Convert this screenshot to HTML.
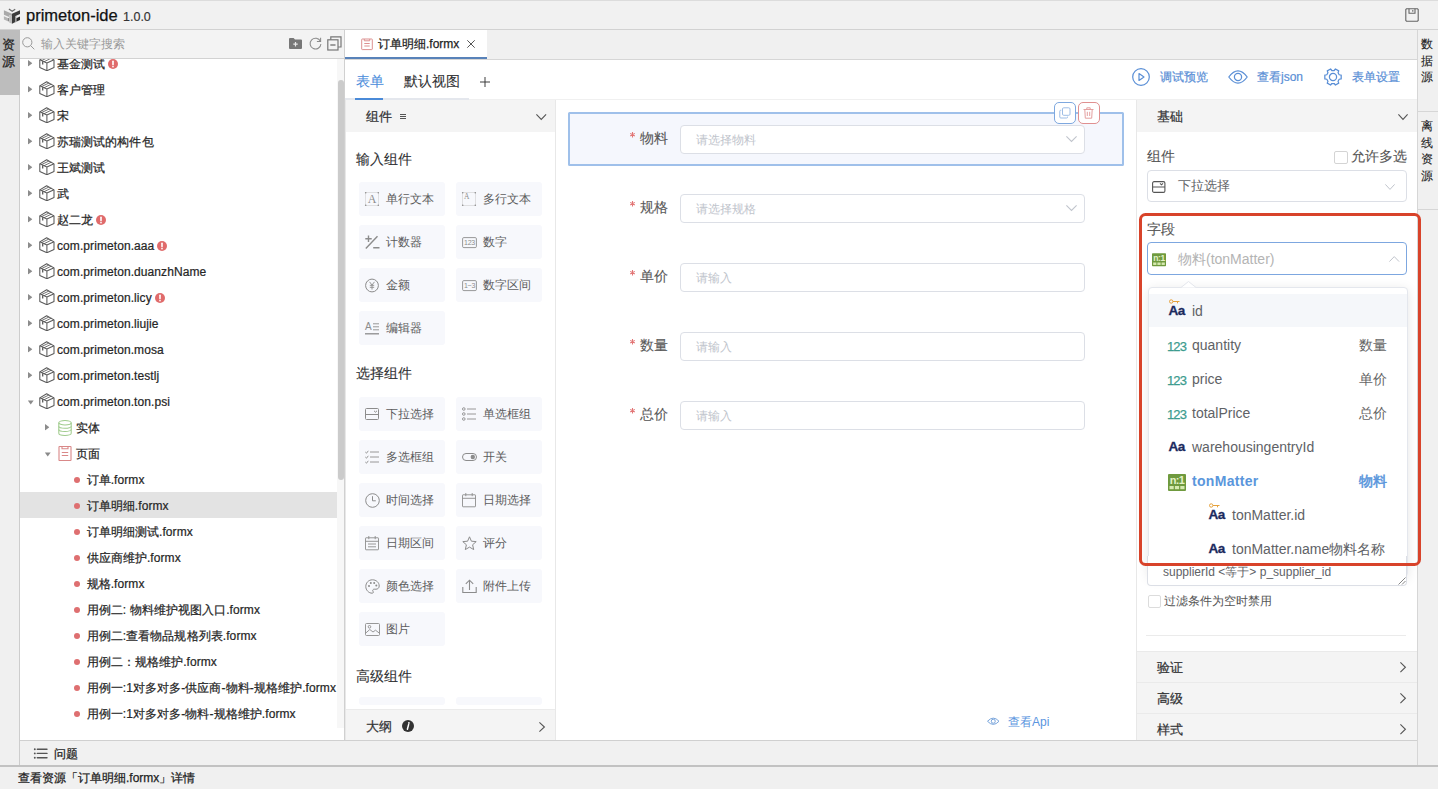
<!DOCTYPE html><html><head><meta charset="utf-8"><style>
*{box-sizing:border-box;margin:0;padding:0}
html,body{width:1438px;height:789px;overflow:hidden;background:#f0f0f0;font-family:"Liberation Sans",sans-serif;color:#333;position:relative}
.s1{-webkit-text-stroke:0.25px currentColor}
.s2{-webkit-text-stroke:0.45px currentColor}
.s0{-webkit-text-stroke:0.1px currentColor}
.a{position:absolute}
.t{position:absolute;white-space:nowrap;line-height:1}
svg{position:absolute;overflow:visible}
.row{position:absolute;left:0;width:318px;height:26px}
.row .tx{position:absolute;top:1px;line-height:26px;font-size:12px;color:#262626;white-space:nowrap;letter-spacing:0.08px;-webkit-text-stroke:0.22px currentColor}
</style></head><body>
<svg width="0" height="0" style="position:absolute"><defs>
<symbol id="pkg" viewBox="0 0 16 16"><g fill="none" stroke="#5a5a5a" stroke-width="1.05" stroke-linejoin="round"><path d="M7.65 0.8L15 4.85V12.5L7.9 15.75L0.8 12.5V4.85Z"/><path d="M0.8 4.85L7.9 8L15 4.85M7.9 8V15.75"/></g><g fill="none" stroke="#5a5a5a" stroke-width="0.85"><path d="M2.5 5.6L9.9 2.05M5.0 6.75L12.3 3.15"/></g><path d="M3.7 6.3V9.4" stroke="#5a5a5a" stroke-width="1.3"/></symbol>
<symbol id="tri" viewBox="0 0 4.4 6.6"><path d="M0 0L4.4 3.3L0 6.6Z" fill="#8c8c8c"/></symbol>
<symbol id="trid" viewBox="0 0 8 6"><path d="M0.5 0.5L7.5 0.5L4 5.5Z" fill="#8a8a8a"/></symbol>
<symbol id="err" viewBox="0 0 10 10"><circle cx="5" cy="5" r="5" fill="#e06b6b"/><path d="M5 2.2V5.6" stroke="#fff" stroke-width="1.6" stroke-linecap="round"/><circle cx="5" cy="7.6" r="0.85" fill="#fff"/></symbol>
</defs></svg>
<div class="a" style="left:0;top:0;width:1438px;height:30px;background:#f1f1f1;border-top:1px solid #dcdcdc;border-bottom:1px solid #d2d2d2"></div>
<svg style="left:0;top:2px" width="26" height="26" viewBox="0 0 26 26">
<path d="M8.9 7L12.2 9.2L15.2 7.3" fill="none" stroke="#6a6a6a" stroke-width="1.3"/>
<path d="M3.9 8.3L12 11.8V14.2L9.2 13V15L3.9 12.7Z" fill="#a9a9a9"/>
<path d="M3.9 14.2L8.3 16.2V19.5L3.9 17.6Z" fill="#b4b4b4"/>
<path d="M8.3 16.2L9.2 15.8V19.1L8.3 19.5Z" fill="#666"/>
<path d="M9.2 13L12 14.2V21.8L9.2 20.4Z" fill="#bdbdbd"/>
<path d="M12 11.8L20 8.2V12L15 14.3V20.2L12 21.8Z" fill="#3a3a3a"/>
<path d="M16.3 16.2L20 14.4V18L16.3 19.8Z" fill="#2a2a2a"/>
<path d="M15 14.3L16.3 13.7V19.9L15 20.5Z" fill="#9a9a9a"/>
</svg>
<div class="t s1" style="left:26px;top:7px;font-size:16.5px;color:#111">primeton-ide</div>
<div class="t" style="left:123px;top:11px;font-size:12.5px;color:#333;-webkit-text-stroke:0.15px currentColor">1.0.0</div>
<svg style="left:1405px;top:8px" width="14" height="14" viewBox="0 0 14 14"><g fill="none" stroke="#666" stroke-width="1.1"><path d="M1.5 0.8H12.5L13.2 1.5V12.5L12.5 13.2H1.5L0.8 12.5V1.5Z"/><path d="M4 0.8V5.2H10V0.8"/><path d="M7.8 2V3.8"/></g></svg>
<div class="a" style="left:0;top:30px;width:20px;height:737px;background:#f0f0f0;border-right:1px solid #cdcdcd"></div>
<div class="a" style="left:0;top:30px;width:20px;height:65px;background:#bdbdbd"></div>
<div class="t s1" style="left:2px;top:38px;font-size:13px;color:#222">资</div>
<div class="t s1" style="left:2px;top:54.5px;font-size:13px;color:#222">源</div>
<div class="a" style="left:20px;top:30px;width:325px;height:711px;background:#fff;border-right:1px solid #d0d0d0;overflow:hidden">
<div class="a" style="left:0;top:28px;width:318px;height:683px;overflow:hidden">
<div class="row" style="top:-8px;">
<svg style="left:7.8px;top:10px" width="4.4" height="6.6" viewBox="0 0 4.4 6.6"><use href="#tri"/></svg>
<svg style="left:18.5px;top:5px" width="16" height="16" viewBox="0 0 16 16"><use href="#pkg"/></svg>
<span class="tx" style="left:37px">基金测试</span>
<svg style="left:87.5px;top:8.5px" width="10" height="10" viewBox="0 0 10 10"><use href="#err"/></svg>
</div>
<div class="row" style="top:18px;">
<svg style="left:7.8px;top:10px" width="4.4" height="6.6" viewBox="0 0 4.4 6.6"><use href="#tri"/></svg>
<svg style="left:18.5px;top:5px" width="16" height="16" viewBox="0 0 16 16"><use href="#pkg"/></svg>
<span class="tx" style="left:37px">客户管理</span>
</div>
<div class="row" style="top:44px;">
<svg style="left:7.8px;top:10px" width="4.4" height="6.6" viewBox="0 0 4.4 6.6"><use href="#tri"/></svg>
<svg style="left:18.5px;top:5px" width="16" height="16" viewBox="0 0 16 16"><use href="#pkg"/></svg>
<span class="tx" style="left:37px">宋</span>
</div>
<div class="row" style="top:70px;">
<svg style="left:7.8px;top:10px" width="4.4" height="6.6" viewBox="0 0 4.4 6.6"><use href="#tri"/></svg>
<svg style="left:18.5px;top:5px" width="16" height="16" viewBox="0 0 16 16"><use href="#pkg"/></svg>
<span class="tx" style="left:37px">苏瑞测试的构件包</span>
</div>
<div class="row" style="top:96px;">
<svg style="left:7.8px;top:10px" width="4.4" height="6.6" viewBox="0 0 4.4 6.6"><use href="#tri"/></svg>
<svg style="left:18.5px;top:5px" width="16" height="16" viewBox="0 0 16 16"><use href="#pkg"/></svg>
<span class="tx" style="left:37px">王斌测试</span>
</div>
<div class="row" style="top:122px;">
<svg style="left:7.8px;top:10px" width="4.4" height="6.6" viewBox="0 0 4.4 6.6"><use href="#tri"/></svg>
<svg style="left:18.5px;top:5px" width="16" height="16" viewBox="0 0 16 16"><use href="#pkg"/></svg>
<span class="tx" style="left:37px">武</span>
</div>
<div class="row" style="top:148px;">
<svg style="left:7.8px;top:10px" width="4.4" height="6.6" viewBox="0 0 4.4 6.6"><use href="#tri"/></svg>
<svg style="left:18.5px;top:5px" width="16" height="16" viewBox="0 0 16 16"><use href="#pkg"/></svg>
<span class="tx" style="left:37px">赵二龙</span>
<svg style="left:75.5px;top:8.5px" width="10" height="10" viewBox="0 0 10 10"><use href="#err"/></svg>
</div>
<div class="row" style="top:174px;">
<svg style="left:7.8px;top:10px" width="4.4" height="6.6" viewBox="0 0 4.4 6.6"><use href="#tri"/></svg>
<svg style="left:18.5px;top:5px" width="16" height="16" viewBox="0 0 16 16"><use href="#pkg"/></svg>
<span class="tx" style="left:37px">com.primeton.aaa</span>
<svg style="left:136.5px;top:8.5px" width="10" height="10" viewBox="0 0 10 10"><use href="#err"/></svg>
</div>
<div class="row" style="top:200px;">
<svg style="left:7.8px;top:10px" width="4.4" height="6.6" viewBox="0 0 4.4 6.6"><use href="#tri"/></svg>
<svg style="left:18.5px;top:5px" width="16" height="16" viewBox="0 0 16 16"><use href="#pkg"/></svg>
<span class="tx" style="left:37px">com.primeton.duanzhName</span>
</div>
<div class="row" style="top:226px;">
<svg style="left:7.8px;top:10px" width="4.4" height="6.6" viewBox="0 0 4.4 6.6"><use href="#tri"/></svg>
<svg style="left:18.5px;top:5px" width="16" height="16" viewBox="0 0 16 16"><use href="#pkg"/></svg>
<span class="tx" style="left:37px">com.primeton.licy</span>
<svg style="left:135px;top:8.5px" width="10" height="10" viewBox="0 0 10 10"><use href="#err"/></svg>
</div>
<div class="row" style="top:252px;">
<svg style="left:7.8px;top:10px" width="4.4" height="6.6" viewBox="0 0 4.4 6.6"><use href="#tri"/></svg>
<svg style="left:18.5px;top:5px" width="16" height="16" viewBox="0 0 16 16"><use href="#pkg"/></svg>
<span class="tx" style="left:37px">com.primeton.liujie</span>
</div>
<div class="row" style="top:278px;">
<svg style="left:7.8px;top:10px" width="4.4" height="6.6" viewBox="0 0 4.4 6.6"><use href="#tri"/></svg>
<svg style="left:18.5px;top:5px" width="16" height="16" viewBox="0 0 16 16"><use href="#pkg"/></svg>
<span class="tx" style="left:37px">com.primeton.mosa</span>
</div>
<div class="row" style="top:304px;">
<svg style="left:7.8px;top:10px" width="4.4" height="6.6" viewBox="0 0 4.4 6.6"><use href="#tri"/></svg>
<svg style="left:18.5px;top:5px" width="16" height="16" viewBox="0 0 16 16"><use href="#pkg"/></svg>
<span class="tx" style="left:37px">com.primeton.testlj</span>
</div>
<div class="row" style="top:330px;">
<svg style="left:6.5px;top:11.5px" width="7.5" height="5" viewBox="0 0 8 6"><use href="#trid"/></svg>
<svg style="left:18.5px;top:5px" width="16" height="16" viewBox="0 0 16 16"><use href="#pkg"/></svg>
<span class="tx" style="left:37px">com.primeton.ton.psi</span>
</div>
<div class="row" style="top:356px;">
<svg style="left:25.3px;top:10px" width="4.4" height="6.6" viewBox="0 0 4.4 6.6"><use href="#tri"/></svg>
<svg style="left:38px;top:6px" width="14" height="16" viewBox="0 0 14 16"><g fill="none" stroke="#9fcb8c" stroke-width="1.05"><ellipse cx="7" cy="2.7" rx="6.2" ry="2.2"/><path d="M0.8 2.7V13.2C0.8 14.5 3.6 15.4 7 15.4C10.4 15.4 13.2 14.5 13.2 13.2V2.7"/><path d="M0.8 6.3C0.8 7.5 3.6 8.3 7 8.3C10.4 8.3 13.2 7.5 13.2 6.3"/><path d="M0.8 9.4C0.8 10.6 3.6 11.4 7 11.4C10.4 11.4 13.2 10.6 13.2 9.4"/></g></svg>
<span class="tx" style="left:56px">实体</span>
</div>
<div class="row" style="top:382px;">
<svg style="left:24.0px;top:11.5px" width="7.5" height="5" viewBox="0 0 8 6"><use href="#trid"/></svg>
<svg style="left:38px;top:5px" width="14" height="16" viewBox="0 0 14 16"><g fill="none" stroke="#d98888" stroke-width="1.1"><path d="M1.6 1.5H12.4Q13 1.5 13 2.1V14.9Q13 15.5 12.4 15.5H1.6Q1 15.5 1 14.9V2.1Q1 1.5 1.6 1.5Z"/><path d="M4 1.5V3.8H10V1.5"/><path d="M3.8 7.5H10.2M3.8 10.5H10.2"/></g></svg>
<span class="tx" style="left:56px">页面</span>
</div>
<div class="row" style="top:408px;">
<div class="a" style="left:54px;top:11px;width:6.3px;height:6.3px;border-radius:50%;background:#de6f70"></div>
<span class="tx" style="left:66.5px">订单.formx</span>
</div>
<div class="row" style="top:434px;background:#e3e3e3;">
<div class="a" style="left:54px;top:11px;width:6.3px;height:6.3px;border-radius:50%;background:#de6f70"></div>
<span class="tx" style="left:66.5px">订单明细.formx</span>
</div>
<div class="row" style="top:460px;">
<div class="a" style="left:54px;top:11px;width:6.3px;height:6.3px;border-radius:50%;background:#de6f70"></div>
<span class="tx" style="left:66.5px">订单明细测试.formx</span>
</div>
<div class="row" style="top:486px;">
<div class="a" style="left:54px;top:11px;width:6.3px;height:6.3px;border-radius:50%;background:#de6f70"></div>
<span class="tx" style="left:66.5px">供应商维护.formx</span>
</div>
<div class="row" style="top:512px;">
<div class="a" style="left:54px;top:11px;width:6.3px;height:6.3px;border-radius:50%;background:#de6f70"></div>
<span class="tx" style="left:66.5px">规格.formx</span>
</div>
<div class="row" style="top:538px;">
<div class="a" style="left:54px;top:11px;width:6.3px;height:6.3px;border-radius:50%;background:#de6f70"></div>
<span class="tx" style="left:66.5px">用例二: 物料维护视图入口.formx</span>
</div>
<div class="row" style="top:564px;">
<div class="a" style="left:54px;top:11px;width:6.3px;height:6.3px;border-radius:50%;background:#de6f70"></div>
<span class="tx" style="left:66.5px">用例二:查看物品规格列表.formx</span>
</div>
<div class="row" style="top:590px;">
<div class="a" style="left:54px;top:11px;width:6.3px;height:6.3px;border-radius:50%;background:#de6f70"></div>
<span class="tx" style="left:66.5px">用例二：规格维护.formx</span>
</div>
<div class="row" style="top:616px;">
<div class="a" style="left:54px;top:11px;width:6.3px;height:6.3px;border-radius:50%;background:#de6f70"></div>
<span class="tx" style="left:66.5px">用例一:1对多对多-供应商-物料-规格维护.formx</span>
</div>
<div class="row" style="top:642px;">
<div class="a" style="left:54px;top:11px;width:6.3px;height:6.3px;border-radius:50%;background:#de6f70"></div>
<span class="tx" style="left:66.5px">用例一:1对多对多-物料-规格维护.formx</span>
</div>
</div>
<div class="a" style="left:0;top:0;width:324px;height:29px;background:#f3f3f3;border-bottom:1px solid #d2d2d2"></div>
<svg style="left:2px;top:7px" width="13" height="13" viewBox="0 0 13 13"><g fill="none" stroke="#999" stroke-width="1"><circle cx="5.3" cy="5.3" r="4.6"/><path d="M8.6 8.6L12.3 12.3"/></g></svg>
<div class="t" style="left:21px;top:8px;font-size:12px;color:#9a9a9a">输入关键字搜索</div>
<svg style="left:269px;top:7.5px" width="13" height="11" viewBox="0 0 13 11"><path d="M0 1Q0 0 1 0H4.6L6 1.4H12Q13 1.4 13 2.4V10Q13 11 12 11H1Q0 11 0 10Z" fill="#777"/><path d="M6.5 4V8.4M4.3 6.2H8.7" stroke="#e8e8e8" stroke-width="1.2"/></svg>
<svg style="left:289px;top:6.5px" width="13" height="13" viewBox="0 0 13 13"><g fill="none" stroke="#8a8a8a" stroke-width="1.05"><path d="M11.4 4.3A5.4 5.4 0 1 0 11.9 7"/><path d="M11.6 0.8V4.5H7.9"/></g></svg>
<svg style="left:307px;top:6px" width="15" height="15" viewBox="0 0 15 15"><g fill="none" stroke="#777" stroke-width="1.2"><rect x="0.8" y="3.8" width="10.2" height="10.2"/><path d="M3.8 3.8V0.8H14V11H11"/><path d="M3.3 9H8.5" stroke-width="1.4"/></g></svg>
<div class="a" style="left:317px;top:29px;width:7px;height:669px;background:#f7f7f7"></div>
<div class="a" style="left:318px;top:50px;width:6px;height:400px;background:#cbcbcb;border-radius:3px"></div>
</div>
<div class="a" style="left:1417px;top:30px;width:21px;height:735px;background:#f0f0f0;border-left:1px solid #d6d6d6"></div>
<div class="a" style="left:345px;top:30px;width:1072px;height:30px;background:#f0f0f0;border-bottom:1px solid #d6d6d6"></div>
<div class="a" style="left:345px;top:30px;width:142px;height:29px;background:#fff;border-bottom:2px solid #5882b9"></div>
<svg style="left:361px;top:37.5px" width="12" height="12" viewBox="0 0 12 12"><g fill="none" stroke="#dc9090" stroke-width="1"><path d="M1.3 1H10.7Q11.3 1 11.3 1.6V11Q11.3 11.6 10.7 11.6H1.3Q0.7 11.6 0.7 11V1.6Q0.7 1 1.3 1Z"/><path d="M3.3 1V2.8H8.7V1"/><path d="M3.3 5.5H8.7M3.3 8H8.7"/></g></svg>
<div class="t s1" style="left:378px;top:38px;font-size:12px;color:#1e1e1e">订单明细.formx</div>
<svg style="left:467px;top:40px" width="8" height="8" viewBox="0 0 8 8"><path d="M0.3 0.3L7.7 7.7M7.7 0.3L0.3 7.7" stroke="#555" stroke-width="1"/></svg>
<div class="a" style="left:345px;top:60px;width:1072px;height:680px;background:#fff"></div>
<div class="t s0" style="left:355.5px;top:74px;font-size:14px;color:#4f8fdc">表单</div>
<div class="t s0" style="left:404px;top:74px;font-size:14px;color:#303133">默认视图</div>
<svg style="left:479.5px;top:76.5px" width="10" height="10" viewBox="0 0 10 10"><path d="M5 0V10M0 5H10" stroke="#333" stroke-width="0.95"/></svg>
<div class="a" style="left:345px;top:98px;width:124px;height:2px;background:#e4e7ed"></div>
<div class="a" style="left:355px;top:98px;width:28px;height:2px;background:#4a8ad8"></div>
<div class="a" style="left:469px;top:99px;width:948px;height:1px;background:#f0f0f0"></div>
<svg style="left:1132px;top:68px" width="18" height="18" viewBox="0 0 18 18"><g fill="none" stroke="#5a8fd6" stroke-width="1.2"><circle cx="9" cy="9" r="8.3"/><path d="M7 5.6V12.4L12 9Z" stroke-linejoin="round"/></g></svg>
<div class="t" style="left:1160px;top:71px;font-size:12px;color:#5a8fd6;-webkit-text-stroke:0.2px currentColor">调试预览</div>
<svg style="left:1228.3px;top:70.2px" width="20" height="14" viewBox="0 0 20 14"><g fill="none" stroke="#5a8fd6" stroke-width="1.25" stroke-linejoin="round"><path d="M0.8 7Q10 -5.4 19.2 7Q10 19.4 0.8 7Z"/><circle cx="10" cy="7" r="3.6"/></g></svg>
<div class="t" style="left:1257px;top:71px;font-size:12px;color:#5a8fd6;-webkit-text-stroke:0.2px currentColor">查看json</div>
<svg style="left:1324.2px;top:68.3px" width="18" height="18" viewBox="0 0 18 18"><g fill="none" stroke="#5a8fd6" stroke-width="1.25" stroke-linejoin="round"><path d="M15.20 6.74 L17.18 7.11 L17.18 10.89 L15.20 11.26 L14.06 13.24 L14.73 15.14 L11.46 17.03 L10.15 15.50 L7.85 15.50 L6.54 17.03 L3.27 15.14 L3.94 13.24 L2.80 11.26 L0.82 10.89 L0.82 7.11 L2.80 6.74 L3.94 4.76 L3.27 2.86 L6.54 0.97 L7.85 2.50 L10.15 2.50 L11.46 0.97 L14.73 2.86 L14.06 4.76Z"/><circle cx="9" cy="9" r="3.6"/></g></svg>
<div class="t" style="left:1352px;top:71px;font-size:12px;color:#5a8fd6;-webkit-text-stroke:0.2px currentColor">表单设置</div>
<div class="a" style="left:345px;top:100px;width:211px;height:640px;background:#fff;border-left:1px solid #e8e8e8;border-right:1px solid #e8e8e8"></div>
<div class="a" style="left:346px;top:100px;width:209px;height:32px;background:#f4f4f4"></div>
<div class="t" style="left:366px;top:110px;font-size:13px;color:#303133;-webkit-text-stroke:0.22px currentColor">组件</div>
<svg style="left:400px;top:114px" width="6" height="5" viewBox="0 0 6 5"><path d="M0 0.5H6M0 2.5H6M0 4.5H6" stroke="#555" stroke-width="1"/></svg>
<svg style="left:535.5px;top:113.5px" width="10.5" height="6" viewBox="0 0 10.5 6"><path d="M0.4 0.4L5.25 5.4L10.1 0.4" fill="none" stroke="#555" stroke-width="1.1"/></svg>
<div class="t s0" style="left:356px;top:152px;font-size:14px;color:#303133">输入组件</div>
<div class="t s0" style="left:356px;top:366px;font-size:14px;color:#303133">选择组件</div>
<div class="t s0" style="left:356px;top:669px;font-size:14px;color:#303133">高级组件</div>
<div class="a" style="left:358.5px;top:181.5px;width:86.5px;height:34px;background:#f7f8fc;border-radius:3px"></div>
<svg style="left:364.5px;top:191.5px" width="15" height="15" viewBox="0 0 15 15"><rect x="0.7" y="0.7" width="12.6" height="12.6" fill="none" stroke="#cfcfcf" stroke-width="0.6"/><g fill="#8c8c8c"><circle cx="0.7" cy="0.7" r="0.8"/><circle cx="13.3" cy="0.7" r="0.8"/><circle cx="0.7" cy="13.3" r="0.8"/><circle cx="13.3" cy="13.3" r="0.8"/></g><text x="7" y="11.3" font-family="Liberation Serif" font-size="12" text-anchor="middle" fill="#8c8c8c">A</text></svg>
<div class="t" style="left:385.5px;top:192.5px;font-size:12px;color:#5c5c5c">单行文本</div>
<div class="a" style="left:455.5px;top:181.5px;width:86.5px;height:34px;background:#f7f8fc;border-radius:3px"></div>
<svg style="left:461.5px;top:191.5px" width="15" height="15" viewBox="0 0 15 15"><rect x="0.7" y="0.7" width="12.6" height="12.6" fill="none" stroke="#cfcfcf" stroke-width="0.6"/><g fill="#8c8c8c"><circle cx="0.7" cy="0.7" r="0.8"/><circle cx="13.3" cy="0.7" r="0.8"/><circle cx="0.7" cy="13.3" r="0.8"/><circle cx="13.3" cy="13.3" r="0.8"/></g><text x="4.8" y="7.2" font-family="Liberation Serif" font-size="7.5" text-anchor="middle" fill="#8c8c8c">A</text></svg>
<div class="t" style="left:482.5px;top:192.5px;font-size:12px;color:#5c5c5c">多行文本</div>
<div class="a" style="left:358.5px;top:224.5px;width:86.5px;height:34px;background:#f7f8fc;border-radius:3px"></div>
<svg style="left:364.5px;top:234.5px" width="15" height="15" viewBox="0 0 15 15"><g stroke="#8c8c8c" stroke-width="1.4" fill="none"><path d="M0.3 3.8H6.7M3.5 0.6V7M0.8 13.6L12.5 1.2M8.2 12.8H14.5"/></g></svg>
<div class="t" style="left:385.5px;top:235.5px;font-size:12px;color:#5c5c5c">计数器</div>
<div class="a" style="left:455.5px;top:224.5px;width:86.5px;height:34px;background:#f7f8fc;border-radius:3px"></div>
<svg style="left:461.5px;top:234.5px" width="15" height="15" viewBox="0 0 15 15"><rect x="0.6" y="2.6" width="13.8" height="10" rx="1.2" fill="none" stroke="#8c8c8c" stroke-width="0.9"/><text x="7.5" y="10.2" font-family="Liberation Sans" font-size="7" text-anchor="middle" fill="#8c8c8c" letter-spacing="-0.3">123</text></svg>
<div class="t" style="left:482.5px;top:235.5px;font-size:12px;color:#5c5c5c">数字</div>
<div class="a" style="left:358.5px;top:267.5px;width:86.5px;height:34px;background:#f7f8fc;border-radius:3px"></div>
<svg style="left:364.5px;top:277.5px" width="15" height="15" viewBox="0 0 15 15"><circle cx="7" cy="7.5" r="6.4" fill="none" stroke="#8c8c8c" stroke-width="1"/><path d="M4.5 3.8L7 7L9.5 3.8M7 7V11.5M4.8 7.3H9.2M4.8 9.3H9.2" fill="none" stroke="#8c8c8c" stroke-width="0.9"/></svg>
<div class="t" style="left:385.5px;top:278.5px;font-size:12px;color:#5c5c5c">金额</div>
<div class="a" style="left:455.5px;top:267.5px;width:86.5px;height:34px;background:#f7f8fc;border-radius:3px"></div>
<svg style="left:461.5px;top:277.5px" width="15" height="15" viewBox="0 0 15 15"><rect x="0.6" y="2.6" width="13.8" height="10" rx="1.2" fill="none" stroke="#8c8c8c" stroke-width="0.9"/><text x="7.5" y="10.2" font-family="Liberation Sans" font-size="7" text-anchor="middle" fill="#8c8c8c" letter-spacing="-0.3">1~3</text></svg>
<div class="t" style="left:482.5px;top:278.5px;font-size:12px;color:#5c5c5c">数字区间</div>
<div class="a" style="left:358.5px;top:310.5px;width:86.5px;height:34px;background:#f7f8fc;border-radius:3px"></div>
<svg style="left:364.5px;top:320.5px" width="15" height="15" viewBox="0 0 15 15"><text x="0" y="9" font-family="Liberation Sans" font-size="10" fill="#8c8c8c">A</text><path d="M8 2.8H14M8 5.8H14M8 8.8H14" stroke="#8c8c8c" stroke-width="0.9"/><path d="M0 12.8H14" stroke="#8c8c8c" stroke-width="1.3"/></svg>
<div class="t" style="left:385.5px;top:321.5px;font-size:12px;color:#5c5c5c">编辑器</div>
<div class="a" style="left:358.5px;top:396.5px;width:86.5px;height:34px;background:#f7f8fc;border-radius:3px"></div>
<svg style="left:364.5px;top:406.5px" width="15" height="15" viewBox="0 0 15 15"><g fill="none" stroke="#8c8c8c" stroke-width="1"><rect x="0.5" y="1.5" width="13" height="11" rx="1"/><path d="M0.5 7.5H13.5M9 3.8L10.5 5.2L12 3.8"/></g></svg>
<div class="t" style="left:385.5px;top:407.5px;font-size:12px;color:#5c5c5c">下拉选择</div>
<div class="a" style="left:455.5px;top:396.5px;width:86.5px;height:34px;background:#f7f8fc;border-radius:3px"></div>
<svg style="left:461.5px;top:406.5px" width="15" height="15" viewBox="0 0 15 15"><g fill="none" stroke="#8c8c8c" stroke-width="0.9"><circle cx="1.8" cy="2" r="1.3"/><circle cx="1.8" cy="7" r="1.3"/><circle cx="1.8" cy="12" r="1.3"/><path d="M5 2H14M5 7H14M5 12H14"/></g></svg>
<div class="t" style="left:482.5px;top:407.5px;font-size:12px;color:#5c5c5c">单选框组</div>
<div class="a" style="left:358.5px;top:439.5px;width:86.5px;height:34px;background:#f7f8fc;border-radius:3px"></div>
<svg style="left:364.5px;top:449.5px" width="15" height="15" viewBox="0 0 15 15"><g fill="none" stroke="#8c8c8c" stroke-width="0.9"><path d="M0.3 2L1.5 3.2L3.3 0.8M0.3 7L1.5 8.2L3.3 5.8M0.3 12L1.5 13.2L3.3 10.8M5 2H14M5 7H14M5 12H14"/></g></svg>
<div class="t" style="left:385.5px;top:450.5px;font-size:12px;color:#5c5c5c">多选框组</div>
<div class="a" style="left:455.5px;top:439.5px;width:86.5px;height:34px;background:#f7f8fc;border-radius:3px"></div>
<svg style="left:461.5px;top:449.5px" width="15" height="15" viewBox="0 0 15 15"><g fill="none" stroke="#8c8c8c" stroke-width="1"><rect x="0.5" y="3.5" width="14" height="7" rx="3.5"/></g><circle cx="10.8" cy="7" r="2.2" fill="#8c8c8c"/></svg>
<div class="t" style="left:482.5px;top:450.5px;font-size:12px;color:#5c5c5c">开关</div>
<div class="a" style="left:358.5px;top:482.5px;width:86.5px;height:34px;background:#f7f8fc;border-radius:3px"></div>
<svg style="left:364.5px;top:492.5px" width="15" height="15" viewBox="0 0 15 15"><g fill="none" stroke="#8c8c8c" stroke-width="1"><circle cx="7.5" cy="7.5" r="6.8"/><path d="M7.5 3.2V7.8H10.8"/></g></svg>
<div class="t" style="left:385.5px;top:493.5px;font-size:12px;color:#5c5c5c">时间选择</div>
<div class="a" style="left:455.5px;top:482.5px;width:86.5px;height:34px;background:#f7f8fc;border-radius:3px"></div>
<svg style="left:461.5px;top:492.5px" width="15" height="15" viewBox="0 0 15 15"><g fill="none" stroke="#8c8c8c" stroke-width="0.9"><rect x="0.5" y="1.8" width="13" height="12" rx="0.5"/><path d="M0.5 5.3H13.5M3.8 0V3.2M10.2 0V3.2"/></g></svg>
<div class="t" style="left:482.5px;top:493.5px;font-size:12px;color:#5c5c5c">日期选择</div>
<div class="a" style="left:358.5px;top:525.5px;width:86.5px;height:34px;background:#f7f8fc;border-radius:3px"></div>
<svg style="left:364.5px;top:535.5px" width="15" height="15" viewBox="0 0 15 15"><g fill="none" stroke="#8c8c8c" stroke-width="0.9"><rect x="0.5" y="1.8" width="13" height="12" rx="0.5"/><path d="M0.5 5.3H13.5M3.8 0V3.2M10.2 0V3.2M3 8H11M3 10.8H11"/></g></svg>
<div class="t" style="left:385.5px;top:536.5px;font-size:12px;color:#5c5c5c">日期区间</div>
<div class="a" style="left:455.5px;top:525.5px;width:86.5px;height:34px;background:#f7f8fc;border-radius:3px"></div>
<svg style="left:461.5px;top:535.5px" width="15" height="15" viewBox="0 0 15 15"><path d="M7.5 0.8L9.4 5.2L14.2 5.6L10.6 8.8L11.7 13.6L7.5 11.1L3.3 13.6L4.4 8.8L0.8 5.6L5.6 5.2Z" fill="none" stroke="#8c8c8c" stroke-width="1" stroke-linejoin="round"/></svg>
<div class="t" style="left:482.5px;top:536.5px;font-size:12px;color:#5c5c5c">评分</div>
<div class="a" style="left:358.5px;top:568.5px;width:86.5px;height:34px;background:#f7f8fc;border-radius:3px"></div>
<svg style="left:364.5px;top:578.5px" width="15" height="15" viewBox="0 0 15 15"><g fill="none" stroke="#8c8c8c" stroke-width="1"><path d="M7.5 0.8C3.5 0.8 0.8 3.8 0.8 7.5C0.8 11.2 3.8 14.2 7.2 14.2C8.4 14.2 8.6 13.2 8 12.3C7.3 11.3 7.9 10.2 9.2 10.2H11C12.8 10.2 14.2 8.9 14.2 7C14.2 3.5 11.2 0.8 7.5 0.8Z"/></g><circle cx="4" cy="7" r="1" fill="#8c8c8c"/><circle cx="5.8" cy="3.9" r="1" fill="#8c8c8c"/><circle cx="9.2" cy="3.9" r="1" fill="#8c8c8c"/><circle cx="11.3" cy="6.6" r="1" fill="#8c8c8c"/></svg>
<div class="t" style="left:385.5px;top:579.5px;font-size:12px;color:#5c5c5c">颜色选择</div>
<div class="a" style="left:455.5px;top:568.5px;width:86.5px;height:34px;background:#f7f8fc;border-radius:3px"></div>
<svg style="left:461.5px;top:578.5px" width="15" height="15" viewBox="0 0 15 15"><g fill="none" stroke="#8c8c8c" stroke-width="1.1"><path d="M0.8 8V13.5H14.2V8M7.5 11V1.2M3.8 4.8L7.5 1.2L11.2 4.8"/></g></svg>
<div class="t" style="left:482.5px;top:579.5px;font-size:12px;color:#5c5c5c">附件上传</div>
<div class="a" style="left:358.5px;top:611.5px;width:86.5px;height:34px;background:#f7f8fc;border-radius:3px"></div>
<svg style="left:364.5px;top:621.5px" width="15" height="15" viewBox="0 0 15 15"><g fill="none" stroke="#8c8c8c" stroke-width="0.9"><rect x="0.5" y="1.5" width="14" height="12" rx="1"/><path d="M0.8 11L4.8 7.5L8 10L10.5 8.2L14.2 11"/><circle cx="4.5" cy="4.8" r="1.3"/></g></svg>
<div class="t" style="left:385.5px;top:622.5px;font-size:12px;color:#5c5c5c">图片</div>
<div class="a" style="left:358.5px;top:697px;width:86.5px;height:8px;background:#f7f8fc;border-radius:3px"></div>
<div class="a" style="left:455.5px;top:697px;width:86.5px;height:8px;background:#f7f8fc;border-radius:3px"></div>
<div class="a" style="left:346px;top:709px;width:209px;height:31px;background:#f4f4f4;border-top:1px solid #ebebeb"></div>
<div class="t" style="left:366px;top:720px;font-size:13px;color:#303133;-webkit-text-stroke:0.22px currentColor">大纲</div>
<svg style="left:402px;top:720px" width="12" height="12" viewBox="0 0 12 12"><circle cx="6" cy="6" r="6" fill="#333"/><path d="M6.6 4.6L5.4 9.2" stroke="#fff" stroke-width="1.5" stroke-linecap="round"/><circle cx="6.9" cy="2.9" r="0.9" fill="#fff"/></svg>
<svg style="left:538.5px;top:721.5px" width="6" height="10" viewBox="0 0 6 10"><path d="M0.4 0.4L5.4 5L0.4 9.6" fill="none" stroke="#555" stroke-width="1.1"/></svg>
<div class="a" style="left:568px;top:112px;width:556px;height:54px;background:#f5f7fd;border:2px solid #9fc0ea;border-radius:1.5px"></div>
<div class="a" style="left:1054px;top:102px;width:22px;height:22px;background:#fff;border:1.2px solid #7ea8df;border-radius:5px"></div>
<svg style="left:1059px;top:107px" width="12" height="12" viewBox="0 0 12 12"><g fill="none" stroke="#9dbde6" stroke-width="1"><rect x="3.5" y="0.8" width="7.5" height="7.5" rx="1.2"/><path d="M2.3 3.2H1.8Q0.8 3.2 0.8 4.2V10Q0.8 11 1.8 11H7.6Q8.6 11 8.6 10V9.6"/></g></svg>
<div class="a" style="left:1077.5px;top:102px;width:22px;height:22px;background:#fff;border:1.2px solid #e09090;border-radius:5px"></div>
<svg style="left:1083px;top:107px" width="11" height="12" viewBox="0 0 11 12"><g fill="none" stroke="#e4a0a0" stroke-width="1"><path d="M0.5 2.5H10.5M3.8 2.5V0.8H7.2V2.5M1.8 2.5L2.3 11.2H8.7L9.2 2.5M4.3 4.8V9M6.7 4.8V9"/></g></svg>
<svg style="left:630px;top:132.3px" width="5" height="5.4" viewBox="0 0 5 5.4"><path d="M2.5 0V5.4M0.2 1.35L4.8 4.05M0.2 4.05L4.8 1.35" stroke="#e27575" stroke-width="1.05"/></svg>
<div class="t s0" style="left:640px;top:131px;font-size:14px;color:#5a5a5a">物料</div>
<div class="a" style="left:679.5px;top:125px;width:405px;height:28.5px;background:#fff;border:1px solid #dcdfe6;border-radius:4px"></div>
<div class="t" style="left:696px;top:134px;font-size:12px;color:#c0c4cc">请选择物料</div>
<svg style="left:1066px;top:136px" width="11" height="6" viewBox="0 0 11 6"><path d="M0.4 0.4L5.5 5.4L10.6 0.4" fill="none" stroke="#c0c4cc" stroke-width="1.1"/></svg>
<svg style="left:630px;top:201.3px" width="5" height="5.4" viewBox="0 0 5 5.4"><path d="M2.5 0V5.4M0.2 1.35L4.8 4.05M0.2 4.05L4.8 1.35" stroke="#e27575" stroke-width="1.05"/></svg>
<div class="t s0" style="left:640px;top:200px;font-size:14px;color:#5a5a5a">规格</div>
<div class="a" style="left:679.5px;top:194px;width:405px;height:28.5px;background:#fff;border:1px solid #dcdfe6;border-radius:4px"></div>
<div class="t" style="left:696px;top:203px;font-size:12px;color:#c0c4cc">请选择规格</div>
<svg style="left:1066px;top:205px" width="11" height="6" viewBox="0 0 11 6"><path d="M0.4 0.4L5.5 5.4L10.6 0.4" fill="none" stroke="#c0c4cc" stroke-width="1.1"/></svg>
<svg style="left:630px;top:270.3px" width="5" height="5.4" viewBox="0 0 5 5.4"><path d="M2.5 0V5.4M0.2 1.35L4.8 4.05M0.2 4.05L4.8 1.35" stroke="#e27575" stroke-width="1.05"/></svg>
<div class="t s0" style="left:640px;top:269px;font-size:14px;color:#5a5a5a">单价</div>
<div class="a" style="left:679.5px;top:263px;width:405px;height:28.5px;background:#fff;border:1px solid #dcdfe6;border-radius:4px"></div>
<div class="t" style="left:696px;top:272px;font-size:12px;color:#c0c4cc">请输入</div>
<svg style="left:630px;top:339.3px" width="5" height="5.4" viewBox="0 0 5 5.4"><path d="M2.5 0V5.4M0.2 1.35L4.8 4.05M0.2 4.05L4.8 1.35" stroke="#e27575" stroke-width="1.05"/></svg>
<div class="t s0" style="left:640px;top:338px;font-size:14px;color:#5a5a5a">数量</div>
<div class="a" style="left:679.5px;top:332px;width:405px;height:28.5px;background:#fff;border:1px solid #dcdfe6;border-radius:4px"></div>
<div class="t" style="left:696px;top:341px;font-size:12px;color:#c0c4cc">请输入</div>
<svg style="left:630px;top:408.3px" width="5" height="5.4" viewBox="0 0 5 5.4"><path d="M2.5 0V5.4M0.2 1.35L4.8 4.05M0.2 4.05L4.8 1.35" stroke="#e27575" stroke-width="1.05"/></svg>
<div class="t s0" style="left:640px;top:407px;font-size:14px;color:#5a5a5a">总价</div>
<div class="a" style="left:679.5px;top:401px;width:405px;height:28.5px;background:#fff;border:1px solid #dcdfe6;border-radius:4px"></div>
<div class="t" style="left:696px;top:410px;font-size:12px;color:#c0c4cc">请输入</div>
<svg style="left:987px;top:717px" width="12.5" height="8.5" viewBox="0 0 12.5 8.5"><g fill="none" stroke="#79a5dc" stroke-width="1"><path d="M0.5 4.25Q6.25 -2 12 4.25Q6.25 10.5 0.5 4.25Z"/><circle cx="6.25" cy="4.25" r="2"/></g></svg>
<div class="t" style="left:1008px;top:715.5px;font-size:12px;color:#5a95e0">查看Api</div>
<div class="a" style="left:1136px;top:100px;width:281px;height:640px;background:#fff;border-left:1px solid #e8e8e8"></div>
<div class="a" style="left:1137px;top:100px;width:280px;height:32px;background:#f4f4f4"></div>
<div class="t" style="left:1157px;top:110px;font-size:13px;color:#303133;-webkit-text-stroke:0.22px currentColor">基础</div>
<svg style="left:1397.5px;top:113.5px" width="10" height="6" viewBox="0 0 10 6"><path d="M0.4 0.4L5 5.4L9.6 0.4" fill="none" stroke="#555" stroke-width="1.1"/></svg>
<div class="t s0" style="left:1147px;top:149px;font-size:14px;color:#555">组件</div>
<div class="a" style="left:1334px;top:150.5px;width:13.5px;height:13.5px;background:#fff;border:1px solid #d4d4d4;border-radius:2px"></div>
<div class="t s0" style="left:1351px;top:149px;font-size:14px;color:#555">允许多选</div>
<div class="a" style="left:1147px;top:170px;width:260px;height:32px;background:#fff;border:1px solid #dcdfe6;border-radius:4px"></div>
<svg style="left:1151.5px;top:180.5px" width="13.5" height="12" viewBox="0 0 13.5 12"><g fill="none" stroke="#555" stroke-width="1.1"><rect x="0.6" y="0.6" width="12.3" height="10.8" rx="1.5"/><path d="M0.6 6H12.9M8 2.4L9.5 3.8L11 2.4"/></g></svg>
<div class="t" style="left:1178px;top:179px;font-size:13px;color:#606266">下拉选择</div>
<svg style="left:1384.5px;top:184px" width="10" height="6" viewBox="0 0 10 6"><path d="M0.4 0.4L5 5.4L9.6 0.4" fill="none" stroke="#c0c4cc" stroke-width="1"/></svg>
<div class="t s0" style="left:1147px;top:221.5px;font-size:14px;color:#555">字段</div>
<div class="a" style="left:1147px;top:242px;width:260px;height:32.5px;background:#fff;border:1px solid #7da7e0;border-radius:4px"></div>
<svg style="left:1151.5px;top:253px" width="14" height="13.5" viewBox="0 0 18 17"><rect x="0" y="0" width="18" height="17" rx="1" fill="#6f9a3e"/><text x="9" y="10.2" font-family="Liberation Sans" font-weight="bold" font-size="11" text-anchor="middle" fill="#e4f2c8" letter-spacing="-0.6">n:1</text><g fill="#d6e9b0"><rect x="1.5" y="12" width="4.2" height="3.2"/><rect x="6.9" y="12" width="4.2" height="3.2"/><rect x="12.3" y="12" width="4.2" height="3.2"/></g></svg>
<div class="t" style="left:1178px;top:252px;font-size:14px;color:#b4b4b4">物料(tonMatter)</div>
<svg style="left:1389px;top:256px" width="10.5" height="6" viewBox="0 0 10.5 6"><path d="M0.4 5.6L5.25 0.6L10.1 5.6" fill="none" stroke="#c0c4cc" stroke-width="1"/></svg>
<div class="a" style="left:1147.5px;top:286.5px;width:260px;height:290px;background:#fff;border:1px solid #e4e7ed;border-radius:4px;box-shadow:0 2px 12px rgba(0,0,0,0.1);overflow:hidden">
<div class="a" style="left:0;top:6px;width:258px;height:33.5px;background:#f5f7fa"></div>
<div class="t" style="left:20.0px;top:16.5px;font-size:13.5px;font-weight:bold;color:#1b2a5e;letter-spacing:-0.4px;-webkit-text-stroke:0.3px currentColor">Aa</div><svg style="left:20.0px;top:11.5px" width="11" height="5" viewBox="0 0 11 5"><circle cx="2.2" cy="2.5" r="1.7" fill="none" stroke="#e6a23c" stroke-width="1"/><path d="M3.9 2.5H10.5M8.5 2.5V4.3" stroke="#e6a23c" stroke-width="1"/></svg>
<div class="t" style="left:43.5px;top:16.5px;font-size:14px;font-weight:normal;color:#606266">id</div>
<div class="t" style="left:18.5px;top:52.0px;font-size:13px;color:#3d9c8f;letter-spacing:-0.9px;-webkit-text-stroke:0.25px currentColor">123</div>
<div class="t" style="left:43.5px;top:50.5px;font-size:14px;font-weight:normal;color:#606266">quantity</div>
<div class="t" style="left:210.5px;top:50.5px;font-size:14px;color:#666;">数量</div>
<div class="t" style="left:18.5px;top:86.0px;font-size:13px;color:#3d9c8f;letter-spacing:-0.9px;-webkit-text-stroke:0.25px currentColor">123</div>
<div class="t" style="left:43.5px;top:84.5px;font-size:14px;font-weight:normal;color:#606266">price</div>
<div class="t" style="left:210.5px;top:84.5px;font-size:14px;color:#666;">单价</div>
<div class="t" style="left:18.5px;top:120.0px;font-size:13px;color:#3d9c8f;letter-spacing:-0.9px;-webkit-text-stroke:0.25px currentColor">123</div>
<div class="t" style="left:43.5px;top:118.5px;font-size:14px;font-weight:normal;color:#606266">totalPrice</div>
<div class="t" style="left:210.5px;top:118.5px;font-size:14px;color:#666;">总价</div>
<div class="t" style="left:20.0px;top:152.5px;font-size:13.5px;font-weight:bold;color:#1b2a5e;letter-spacing:-0.4px;-webkit-text-stroke:0.3px currentColor">Aa</div>
<div class="t" style="left:43.5px;top:152.5px;font-size:14px;font-weight:normal;color:#606266">warehousingentryId</div>
<svg style="left:19.5px;top:186.5px" width="18" height="17" viewBox="0 0 18 17"><rect x="0" y="0" width="18" height="17" rx="1" fill="#6f9a3e"/><text x="9" y="10.2" font-family="Liberation Sans" font-weight="bold" font-size="11" text-anchor="middle" fill="#e4f2c8" letter-spacing="-0.6">n:1</text><g fill="#d6e9b0"><rect x="1.5" y="12" width="4.2" height="3.2"/><rect x="6.9" y="12" width="4.2" height="3.2"/><rect x="12.3" y="12" width="4.2" height="3.2"/></g></svg>
<div class="t" style="left:43.5px;top:186.5px;font-size:14px;font-weight:bold;letter-spacing:0.3px;color:#5a96dc">tonMatter</div>
<div class="t" style="left:210.5px;top:186.5px;font-size:14px;color:#5a96dc;-webkit-text-stroke:0.5px currentColor">物料</div>
<div class="t" style="left:60.0px;top:220.5px;font-size:13.5px;font-weight:bold;color:#1b2a5e;letter-spacing:-0.4px;-webkit-text-stroke:0.3px currentColor">Aa</div><svg style="left:60.0px;top:215.5px" width="11" height="5" viewBox="0 0 11 5"><circle cx="2.2" cy="2.5" r="1.7" fill="none" stroke="#e6a23c" stroke-width="1"/><path d="M3.9 2.5H10.5M8.5 2.5V4.3" stroke="#e6a23c" stroke-width="1"/></svg>
<div class="t" style="left:83.5px;top:220.5px;font-size:14px;font-weight:normal;color:#606266">tonMatter.id</div>
<div class="t" style="left:60.0px;top:254.5px;font-size:13.5px;font-weight:bold;color:#1b2a5e;letter-spacing:-0.4px;-webkit-text-stroke:0.3px currentColor">Aa</div>
<div class="t" style="left:83.5px;top:254.5px;font-size:14px;font-weight:normal;color:#606266">tonMatter.name物料名称</div>
</div>
<svg style="left:1181px;top:281px" width="15" height="7" viewBox="0 0 15 7"><path d="M0 6.5L7.5 0.5L15 6.5" fill="#fff" stroke="#e4e7ed" stroke-width="1"/></svg>
<div class="a" style="left:1147px;top:556px;width:260px;height:30px;background:#fff;border:1px solid #dcdfe6;border-bottom-left-radius:4px;border-bottom-right-radius:4px;border-top:none"></div>
<div class="t" style="left:1163px;top:566px;font-size:12px;color:#606266">supplierId &lt;等于&gt; p_supplier_id</div>
<svg style="left:1397.5px;top:577px" width="8" height="8" viewBox="0 0 8 8"><path d="M7.5 0.5L0.5 7.5M7.5 4L4 7.5" stroke="#777" stroke-width="0.9"/></svg>
<div class="a" style="left:1139px;top:213px;width:282px;height:352.5px;border:3.8px solid #d8432a;border-radius:6.5px"></div>
<div class="a" style="left:1147.5px;top:594.5px;width:13px;height:13px;background:#fff;border:1px solid #dcdcdc;border-radius:2px"></div>
<div class="t" style="left:1164px;top:595px;font-size:12px;color:#555">过滤条件为空时禁用</div>
<div class="a" style="left:1146px;top:635px;width:260px;height:1px;background:#ebebeb"></div>
<div class="a" style="left:1137px;top:651px;width:280px;height:31px;background:#f4f4f4;border-top:1px solid #eaeaea"></div>
<div class="t" style="left:1157px;top:661px;font-size:13px;color:#303133;-webkit-text-stroke:0.22px currentColor">验证</div>
<svg style="left:1399.5px;top:662px" width="6" height="10.5" viewBox="0 0 6 10.5"><path d="M0.4 0.4L5.4 5.25L0.4 10.1" fill="none" stroke="#555" stroke-width="1.1"/></svg>
<div class="a" style="left:1137px;top:682px;width:280px;height:31px;background:#f4f4f4;border-top:1px solid #eaeaea"></div>
<div class="t" style="left:1157px;top:692px;font-size:13px;color:#303133;-webkit-text-stroke:0.22px currentColor">高级</div>
<svg style="left:1399.5px;top:693px" width="6" height="10.5" viewBox="0 0 6 10.5"><path d="M0.4 0.4L5.4 5.25L0.4 10.1" fill="none" stroke="#555" stroke-width="1.1"/></svg>
<div class="a" style="left:1137px;top:713px;width:280px;height:28px;background:#f4f4f4;border-top:1px solid #eaeaea"></div>
<div class="t" style="left:1157px;top:723px;font-size:13px;color:#303133;-webkit-text-stroke:0.22px currentColor">样式</div>
<svg style="left:1399.5px;top:724px" width="6" height="10.5" viewBox="0 0 6 10.5"><path d="M0.4 0.4L5.4 5.25L0.4 10.1" fill="none" stroke="#555" stroke-width="1.1"/></svg>
<div class="a" style="left:1418px;top:111px;width:20px;height:1px;background:#d6d6d6"></div>
<div class="a" style="left:1418px;top:209px;width:20px;height:1px;background:#d6d6d6"></div>
<div class="t s0" style="left:1421px;top:38.0px;font-size:12px;color:#222">数</div>
<div class="t s0" style="left:1421px;top:54.5px;font-size:12px;color:#222">据</div>
<div class="t s0" style="left:1421px;top:71.0px;font-size:12px;color:#222">源</div>
<div class="t s0" style="left:1421px;top:120.0px;font-size:12px;color:#222">离</div>
<div class="t s0" style="left:1421px;top:136.5px;font-size:12px;color:#222">线</div>
<div class="t s0" style="left:1421px;top:153.0px;font-size:12px;color:#222">资</div>
<div class="t s0" style="left:1421px;top:169.5px;font-size:12px;color:#222">源</div>
<div class="a" style="left:20px;top:740px;width:1397px;height:25px;background:#f1f1f1;border-top:1.5px solid #d0d0d0"></div>
<svg style="left:33px;top:747px" width="15" height="13" viewBox="0 0 15 13"><g fill="#555"><circle cx="1.8" cy="2.2" r="0.95"/><circle cx="1.8" cy="6.4" r="0.95"/><circle cx="1.8" cy="10.7" r="0.95"/></g><path d="M4.3 2.2H14M4.3 6.4H14M4.3 10.7H14" stroke="#555" stroke-width="1.4" stroke-linecap="round"/></svg>
<div class="t s1" style="left:54px;top:748px;font-size:12px;color:#222">问题</div>
<div class="a" style="left:0;top:765px;width:1438px;height:24px;background:#f0f0f0;border-top:2px solid #c2c2c2"></div>
<div class="t s1" style="left:18px;top:772px;font-size:12px;color:#222">查看资源「订单明细.formx」详情</div>
</body></html>
